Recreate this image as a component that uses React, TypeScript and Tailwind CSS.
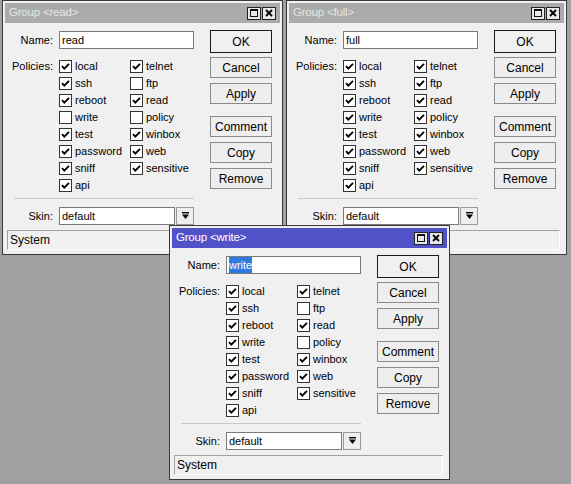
import React from "react";

const col1 = ["local", "ssh", "reboot", "write", "test", "password", "sniff", "api"];
const col2 = ["telnet", "ftp", "read", "policy", "winbox", "web", "sensitive"];

function Check({ on, label }: { on: boolean; label: string }) {
  return (
    <div className="flex items-center h-[17px] gap-[3px]">
      <span className="w-[13px] h-[13px] border border-[#333] bg-white flex items-center justify-center shrink-0">
        {on && (
          <svg width="9" height="9" viewBox="0 0 9 9">
            <polyline points="1,4.2 3.3,6.6 8,1.8" fill="none" stroke="#000" strokeWidth="1.9" />
          </svg>
        )}
      </span>
      <span>{label}</span>
    </div>
  );
}

function Btn({ children, def }: { children: React.ReactNode; def?: boolean }) {
  return (
    <div
      className={
        def
          ? "h-[23px] border border-[#1a1a1a] bg-[#f0f0f0] flex items-center justify-center text-[12px]"
          : "h-[21px] border border-[#8a8a8a] bg-[#eeeeee] flex items-center justify-center text-[12px]"
      }
    >
      {children}
    </div>
  );
}

function GroupWindow({
  name,
  active,
  checks,
  className,
}: {
  name: string;
  active?: boolean;
  checks: boolean[];
  className: string;
}) {
  return (
    <div className={"absolute w-[281px] h-[255px] border border-[#3a3a3a] bg-[#f0f0f0] px-[2px] pt-[2px] flex flex-col " + className}>
      {/* title bar */}
      <div
        className={
          active
            ? "h-[20px] bg-[#5252c8] text-white flex items-center pl-[4px] pr-[4px] text-[11.5px]"
            : "h-[20px] bg-[#ababab] text-[#e6e6e6] flex items-center pl-[4px] pr-[4px] text-[11.5px]"
        }
      >
        <span className="flex-1 tracking-[-0.2px]">Group &lt;{name}&gt;</span>
        <div className="flex gap-[1px]">
          <span className="w-[14px] h-[13px] border border-[#222] bg-[#e8e8e8] flex items-center justify-center">
            <span className="w-[8px] h-[8px] border border-[#111] border-t-2" />
          </span>
          <span className="w-[14px] h-[13px] border border-[#222] bg-[#e8e8e8] flex items-center justify-center">
            <svg width="8" height="8" viewBox="0 0 8 8">
              <path d="M1 1 L7 7 M7 1 L1 7" stroke="#000" strokeWidth="1.8" />
            </svg>
          </span>
        </div>
      </div>

      {/* client */}
      <div className="flex-1 flex flex-col text-[11px] text-[#000]">
        <div className="flex">
          <div className="w-[189px] flex flex-col">
            <div className="flex items-center mt-[8px]">
              <span className="w-[48px] text-right">Name:</span>
              <div className="ml-[6px] w-[135px] h-[18px] border border-[#7a7a7a] bg-white flex items-center pl-[2px]">
                {active ? <span className="bg-[#2f7ae0] text-white">{name}</span> : <span>{name}</span>}
              </div>
            </div>
            <div className="flex mt-[9px]">
              <span className="w-[48px] text-right h-[17px] leading-[17px]">Policies:</span>
              <div className="ml-[6px] flex">
                <div className="w-[71px] flex flex-col">
                  {col1.map((p, i) => (
                    <Check key={p} label={p} on={checks[i]} />
                  ))}
                </div>
                <div className="flex flex-col">
                  {col2.map((p, i) => (
                    <Check key={p} label={p} on={checks[8 + i]} />
                  ))}
                </div>
              </div>
            </div>
            <div className="ml-[9px] mt-[4px] h-px bg-[#c8c8c8]" />
            <div className="flex items-center mt-[8px]">
              <span className="w-[48px] text-right">Skin:</span>
              <div className="ml-[6px] w-[116px] h-[18px] border border-[#7a7a7a] bg-white flex items-center pl-[2px]">
                default
              </div>
              <div className="ml-[1px] w-[18px] h-[18px] border border-[#9a9a9a] bg-[#eeeeee] flex items-center justify-center">
                <svg width="7" height="8" viewBox="0 0 7 8">
                  <rect x="0" y="0" width="7" height="1.4" fill="#000" />
                  <polygon points="0,2.5 7,2.5 3.5,7" fill="#000" />
                </svg>
              </div>
            </div>
          </div>
          <div className="ml-[16px] w-[62px] mt-[7px] flex flex-col">
            <Btn def>OK</Btn>
            <div className="mt-[4px]">
              <Btn>Cancel</Btn>
            </div>
            <div className="mt-[5px]">
              <Btn>Apply</Btn>
            </div>
            <div className="mt-[12px]">
              <Btn>Comment</Btn>
            </div>
            <div className="mt-[5px]">
              <Btn>Copy</Btn>
            </div>
            <div className="mt-[5px]">
              <Btn>Remove</Btn>
            </div>
          </div>
        </div>
        <div className="mt-[5px] ml-[2px] mr-[4px] h-[20px] border border-t-[#a0a0a0] border-l-[#a0a0a0] border-r-white border-b-white flex items-center pl-[2px] text-[12px]">
          System
        </div>
      </div>
    </div>
  );
}

export default function App() {
  const readChecks = [true, true, true, false, true, true, true, true, true, false, true, false, true, true, true];
  const fullChecks = Array(15).fill(true);
  const writeChecks = [true, true, true, true, true, true, true, true, true, false, true, false, true, true, true];
  return (
    <div className="relative w-[571px] h-[484px] bg-[#a0a0a0] overflow-hidden font-['Liberation_Sans',Arial,sans-serif]">
      <GroupWindow name="read" checks={readChecks} className="left-[2px] top-0" />
      <GroupWindow name="full" checks={fullChecks} className="left-[286px] top-0" />
      <GroupWindow name="write" active checks={writeChecks} className="left-[169px] top-[225px]" />
    </div>
  );
}
